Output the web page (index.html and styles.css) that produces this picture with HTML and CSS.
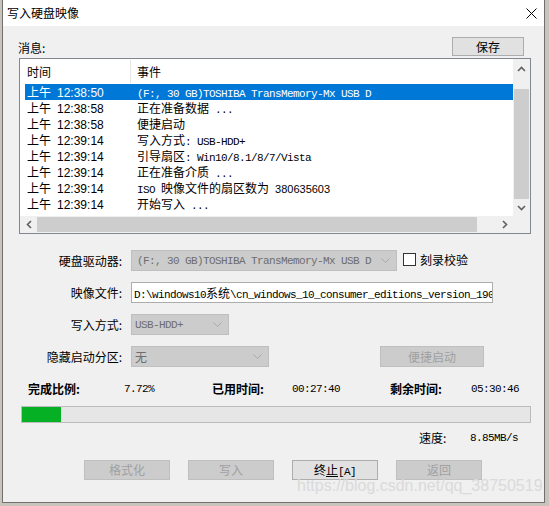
FILE: index.html
```html
<!DOCTYPE html>
<html lang="zh-CN">
<head>
<meta charset="utf-8">
<title>写入硬盘映像</title>
<link rel="stylesheet" href="styles.css">
</head>
<body>
<div class="window">
  <div class="titlebar">
    <span class="title">写入硬盘映像</span>
    <svg class="close" width="11" height="11" viewBox="0 0 11 11"><path d="M0.5 0.5L10.5 10.5M10.5 0.5L0.5 10.5" stroke="#000" stroke-width="1" fill="none"/></svg>
  </div>
  <div class="client">
    <div class="msg-row">
      <span class="msg-label">消息:</span>
      <button class="btn btn-save">保存</button>
    </div>
    <div class="list">
      <div class="list-view">
        <div class="list-header">
          <div class="hcell hcell-time">时间</div>
          <div class="hcell hcell-event">事件</div>
        </div>
        <div class="row selected"><div class="cell-time">上午<span class="t">12:38:50</span></div><div class="cell-event"><span class="m">(F:, 30 GB)TOSHIBA TransMemory-Mx USB D</span></div></div>
        <div class="row"><div class="cell-time">上午<span class="t">12:38:58</span></div><div class="cell-event">正在准备数据<span class="m"> ...</span></div></div>
        <div class="row"><div class="cell-time">上午<span class="t">12:38:58</span></div><div class="cell-event">便捷启动</div></div>
        <div class="row"><div class="cell-time">上午<span class="t">12:39:14</span></div><div class="cell-event">写入方式<span class="m">: USB-HDD+</span></div></div>
        <div class="row"><div class="cell-time">上午<span class="t">12:39:14</span></div><div class="cell-event">引导扇区<span class="m">: Win10/8.1/8/7/Vista</span></div></div>
        <div class="row"><div class="cell-time">上午<span class="t">12:39:14</span></div><div class="cell-event">正在准备介质<span class="m"> ...</span></div></div>
        <div class="row"><div class="cell-time">上午<span class="t">12:39:14</span></div><div class="cell-event"><span class="m">ISO </span>映像文件的扇区数为<span class="m"> </span><span class="num">380635603</span></div></div>
        <div class="row"><div class="cell-time">上午<span class="t">12:39:14</span></div><div class="cell-event">开始写入<span class="m"> ...</span></div></div>
      </div>
      <div class="vscroll">
        <div class="sb-btn sb-up"><svg width="9" height="6" viewBox="0 0 9 6"><polyline points="1,5 4.5,1.5 8,5" fill="none" stroke="#606060" stroke-width="1.6"/></svg></div>
        <div class="vtrack"><div class="vthumb"></div></div>
        <div class="sb-btn sb-down"><svg width="9" height="6" viewBox="0 0 9 6"><polyline points="1,1 4.5,4.5 8,1" fill="none" stroke="#606060" stroke-width="1.6"/></svg></div>
      </div>
      <div class="hscroll">
        <div class="sb-btn"><svg width="6" height="9" viewBox="0 0 6 9"><polyline points="5,1 1.5,4.5 5,8" fill="none" stroke="#606060" stroke-width="1.6"/></svg></div>
        <div class="htrack"><div class="hthumb"></div></div>
        <div class="sb-btn"><svg width="6" height="9" viewBox="0 0 6 9"><polyline points="1,1 4.5,4.5 1,8" fill="none" stroke="#606060" stroke-width="1.6"/></svg></div>
      </div>
      <div class="corner"></div>
    </div>

    <div class="form">
      <div class="frow">
        <span class="flabel">硬盘驱动器:</span>
        <div class="combo combo-drive"><span class="m">(F:, 30 GB)TOSHIBA TransMemory-Mx USB D</span><svg width="9" height="5" viewBox="0 0 9 5"><polyline points="0.5,0.5 4.5,4.5 8.5,0.5" fill="none" stroke="#a8a8a8" stroke-width="1"/></svg></div>
        <span class="chk"></span>
        <span class="chk-label">刻录校验</span>
      </div>
      <div class="frow">
        <span class="flabel">映像文件:</span>
        <div class="tbox"><span class="m">D:\windows10</span>系统<span class="m">\cn_windows_10_consumer_editions_version_1909</span></div>
      </div>
      <div class="frow">
        <span class="flabel">写入方式:</span>
        <div class="combo combo-mode"><span class="m">USB-HDD+</span><svg width="9" height="5" viewBox="0 0 9 5"><polyline points="0.5,0.5 4.5,4.5 8.5,0.5" fill="none" stroke="#a8a8a8" stroke-width="1"/></svg></div>
      </div>
      <div class="frow">
        <span class="flabel">隐藏启动分区:</span>
        <div class="combo combo-hide"><span>无</span><svg width="9" height="5" viewBox="0 0 9 5"><polyline points="0.5,0.5 4.5,4.5 8.5,0.5" fill="none" stroke="#a8a8a8" stroke-width="1"/></svg></div>
        <button class="btn disabled btn-boot">便捷启动</button>
      </div>
    </div>

    <div class="prow">
      <span class="pl pl1">完成比例:</span>
      <span class="pv pv1 m">7.72%</span>
      <span class="pl pl2">已用时间:</span>
      <span class="pv pv2 m">00:27:40</span>
      <span class="pl pl3">剩余时间:</span>
      <span class="pv m">05:30:46</span>
    </div>
    <div class="pbar"><div class="pfill" style="width:7.72%"></div></div>
    <div class="speed-row">
      <span class="speed-label">速度:</span>
      <span class="m">8.85MB/s</span>
    </div>
    <div class="btn-row">
      <button class="btn disabled act">格式化</button>
      <button class="btn disabled act">写入</button>
      <button class="btn act">终<u>止</u><span class="m">[A]</span></button>
      <button class="btn disabled act">返回</button>
    </div>
  </div>
  <div class="watermark">https://blog.csdn.net/qq_38750519</div>
</div>
</body>
</html>
```

FILE: styles.css
```css
* { box-sizing: border-box; }
html, body { margin: 0; padding: 0; }
body {
  width: 549px;
  height: 506px;
  overflow: hidden;
  background: #c9c4bb;
  font-family: "Noto Sans CJK SC", "Liberation Sans", sans-serif;
  font-size: 12px;
  color: #000;
}
.m {
  font-family: "Liberation Mono", "DejaVu Sans Mono", monospace;
  font-size: 11px;
  letter-spacing: -0.6px;
  white-space: pre;
}
.window {
  position: relative;
  margin-left: 2px;
  width: 543px;
  height: 503px;
  background: #f0f0f0;
  border: 1px solid #707070;
  border-top: none;
}
.titlebar {
  height: 26px;
  background: #fff;
  display: flex;
  align-items: center;
  justify-content: space-between;
  padding: 0 7px 0 4px;
}
.title { line-height: 26px; }
.close { margin-top: 1px; }
.client { padding-top: 11px; }
.msg-row {
  display: flex;
  justify-content: space-between;
  align-items: center;
  height: 19px;
  padding: 0 20px 0 15px;
}
.msg-label { line-height: 19px; padding-top: 2px; }
.btn {
  font-family: "Noto Sans CJK SC", "Liberation Sans", sans-serif;
  font-size: 12px;
  color: #000;
  height: 20px;
  padding: 0;
  margin: 0;
  line-height: 18px;
  background: #e1e1e1;
  border: 1px solid #adadad;
  border-radius: 0;
}
.btn.disabled {
  background: #cccccc;
  border-color: #bfbfbf;
  color: #a0a0a0;
}
.btn-save { width: 72px; height: 19px; line-height: 17px; }

.list {
  margin: 2px 0 0 16px;
  width: 512px;
  height: 176px;
  border: 1px solid #828790;
  display: grid;
  grid-template-columns: 493px 17px;
  grid-template-rows: 157px 17px;
  background: #fff;
}
.list-view { overflow: hidden; background: #fff; }
.list-header { display: flex; height: 25px; }
.hcell-time {
  width: 111px;
  height: 23px;
  margin-top: 1px;
  line-height: 23px;
  padding-left: 7px;
  border-right: 1px solid #e5e5e5;
}
.hcell-event { line-height: 25px; padding-left: 6px; }
.row {
  display: flex;
  margin-left: 5px;
  height: 16px;
  line-height: 16px;
  overflow: hidden;
  white-space: nowrap;
}
.row.selected { background: #0078d7; color: #fff; }
.cell-time { width: 105px; padding-left: 2px; }
.t {
  font-family: "Liberation Sans", sans-serif;
  font-size: 12px;
  margin-left: 6px;
}
.cell-event { padding-left: 7px; }
.num { font-family: "Liberation Sans", sans-serif; font-size: 11px; }

.vscroll { background: #f0f0f0; display: flex; flex-direction: column; }
.sb-btn {
  width: 17px;
  height: 17px;
  flex: none;
  display: flex;
  align-items: center;
  justify-content: center;
}
.sb-up svg { margin-top: 3px; }
.vtrack { flex: 1; padding: 13px 1px 0; }
.vthumb { height: 110px; background: #cdcdcd; }
.hscroll { background: #f0f0f0; display: flex; }
.htrack { flex: 1; padding: 1px 0; }
.hthumb { width: 440px; height: 15px; background: #cdcdcd; }
.corner { background: #f0f0f0; }

.form { margin-top: 16px; }
.frow {
  display: flex;
  align-items: center;
  height: 21px;
  margin-top: 11px;
}
.frow:first-child { margin-top: 0; }
.flabel { width: 119px; text-align: right; margin-right: 9px; white-space: nowrap; }
.combo {
  height: 21px;
  background: #cccccc;
  border: 1px solid #bfbfbf;
  color: #6d6d6d;
  display: flex;
  align-items: center;
  justify-content: space-between;
  padding: 0 6px 0 5px;
  overflow: hidden;
  white-space: nowrap;
}
.combo-drive { width: 266px; }
.combo-mode { width: 98px; padding-left: 3px; }
.combo-hide { width: 138px; padding-left: 3px; }
.chk {
  width: 13px;
  height: 13px;
  margin: -3px 0 0 6px;
  background: #fff;
  border: 1px solid #333;
}
.chk-label { margin: -2px 0 0 4px; }
.tbox {
  width: 362px;
  height: 21px;
  background: #fff;
  border: 1px solid #acacac;
  padding-left: 2px;
  line-height: 19px;
  overflow: hidden;
  white-space: nowrap;
}
.btn-boot { width: 104px; height: 21px; margin-left: 111px; }

.prow {
  display: flex;
  margin-top: 14px;
  height: 16px;
  line-height: 16px;
  padding-left: 25px;
  white-space: nowrap;
}
.pl { font-weight: bold; }
.pl1 { width: 96px; }
.pv1 { width: 88px; }
.pl2 { width: 80px; }
.pv2 { width: 98px; }
.pl3 { width: 81px; }
.pbar {
  margin: 9px 0 0 18px;
  width: 510px;
  height: 17px;
  border: 1px solid #bcbcbc;
  background: #e6e6e6;
}
.pfill { height: 100%; background: #06b025; }
.speed-row {
  display: flex;
  margin-top: 7px;
  height: 16px;
  line-height: 16px;
  padding-left: 416px;
}
.speed-label { width: 51px; }
.btn-row {
  display: flex;
  gap: 18px;
  margin-top: 14px;
  padding-left: 81px;
}
.act { width: 86px; }
.act u { text-decoration: underline; }
.watermark {
  position: absolute;
  left: 294px;
  top: 477px;
  font-family: "Liberation Sans", Arial, sans-serif;
  font-size: 16px;
  color: #dadada;
  white-space: nowrap;
  pointer-events: none;
}
```
